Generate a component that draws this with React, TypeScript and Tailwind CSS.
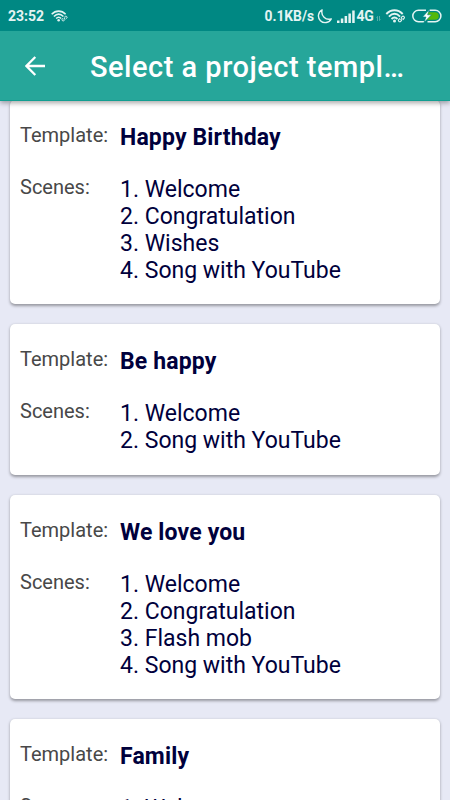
import { ReactNode } from "react";

const templates = [
  {
    id: 1,
    name: "Happy Birthday",
    scenes: ["Welcome", "Congratulation", "Wishes", "Song with YouTube"],
  },
  {
    id: 2,
    name: "Be happy",
    scenes: ["Welcome", "Song with YouTube"],
  },
  {
    id: 3,
    name: "We love you",
    scenes: ["Welcome", "Congratulation", "Flash mob", "Song with YouTube"],
  },
  {
    id: 4,
    name: "Family",
    scenes: ["Welcome"],
  },
];

const WifiIcon = ({ className }: { className: string }) => (
  <svg viewBox="0 0 20 14" fill="none" stroke="currentColor" className={className}>
    <path d="M0.8 5C5.5 0 12.5 0 17.2 5" strokeWidth="1.9" />
    <path d="M3.4 7.6C7 4 11 4 14.6 7.6" strokeWidth="1.9" />
    <path d="M6 10C8 8 10 8 12 10" strokeWidth="1.8" />
    <circle cx="9" cy="12" r="1.5" fill="currentColor" stroke="none" />
    <path
      d="M15.4 8.8l1.2-1.2a1.3 1.3 0 0 1 1.9 1.9l-1.3 1.3M16.4 11.2l-1.2 1.2a1.3 1.3 0 0 1-1.9-1.9l1.2-1.2M15 11l1.8-1.9"
      strokeWidth="1.1"
    />
  </svg>
);

const StatusBar = () => (
  <div className="flex h-[31px] items-center bg-[#008883] pt-px pr-[8px] pl-[8px] font-bold text-[#e4f4f3]">
    <span className="w-[37px] text-[14px]">23:52</span>
    <WifiIcon className="ml-[6px] h-[12px] w-[17px]" />
    <div className="ml-auto flex items-center">
      <span className="w-[50px] text-[13.8px] whitespace-nowrap">0.1KB/s</span>
      <svg viewBox="0 0 14 14" fill="none" stroke="currentColor" className="ml-[2px] h-[15px] w-[15px]">
        <path
          d="M4.8 0.8A6.3 6.3 0 1 0 13.3 9.2C8.2 10.9 3.3 6.2 4.8 0.8Z"
          strokeWidth="1.3"
          strokeLinejoin="round"
        />
      </svg>
      <svg viewBox="0 0 18 13" fill="currentColor" className="ml-[5px] h-[13px] w-[18px]">
        <rect x="0" y="10.5" width="2.5" height="2.5" />
        <rect x="3.8" y="8.5" width="2.5" height="4.5" />
        <rect x="7.6" y="6" width="2.5" height="7" />
        <rect x="11.4" y="3.5" width="2.5" height="9.5" />
        <rect x="15.2" y="0.5" width="2.5" height="12.5" />
      </svg>
      <span className="ml-[2px] w-[18px] text-[14px] tracking-[-0.2px]">4G</span>
      <svg viewBox="0 0 5 5" fill="none" stroke="currentColor" className="mt-[5px] ml-[1.5px] h-[5px] w-[5px] opacity-45">
        <path d="M1.5 5V0.5L0.5 1.5M3.5 0V4.5L4.5 3.5" strokeWidth="0.8" />
      </svg>
      <WifiIcon className="ml-[4px] h-[14px] w-[21px]" />
      <svg viewBox="0 0 30 14" fill="none" className="ml-[6px] h-[14px] w-[30px]">
        <path d="M14 3.2H23a3.8 3.8 0 0 1 0 7.6H14Z" fill="#55b80b" />
        <path
          d="M14 1.3H6.5a5.7 5.7 0 0 0 0 11.4H12M17.5 1.3H23.2a5.7 5.7 0 0 1 0 11.4H15.5"
          stroke="currentColor"
          strokeWidth="1.5"
        />
        <path d="M17.3 0.5L10.6 8H14L12 13.5L19.5 5.8H15.6Z" fill="#fff" stroke="#008883" strokeWidth="0.6" />
      </svg>
    </div>
  </div>
);

const AppBar = () => (
  <header className="flex h-[70px] items-center border-b border-[#129e91] bg-[#26a69a] text-white">
    <svg viewBox="0 0 20 20" fill="none" stroke="currentColor" className="mt-px ml-[25px] h-[20px] w-[20px]">
      <path d="M20 10H2M10.3 1L1.4 10L10.3 19" strokeWidth="2.3" />
    </svg>
    <h1 className="mt-[4px] ml-[45px] text-[29px] leading-none font-medium tracking-[0.5px] whitespace-nowrap">
      Select a project templ…
    </h1>
  </header>
);

const Row = ({ label, children }: { label: string; children: ReactNode }) => (
  <div className="flex text-[23px] leading-[27px] text-[#00003c]">
    <span className="w-[100px] shrink-0 text-[20px] leading-[22px] text-[#484848]">{label}</span>
    {children}
  </div>
);

const App = () => {
  return (
    <div className="flex h-[800px] w-[450px] flex-col overflow-hidden bg-[#e7e9f5] font-['Roboto',sans-serif]">
      <div className="relative z-10 shrink-0 shadow-[0_2px_5px_rgba(0,0,0,0.35)]">
        <StatusBar />
        <AppBar />
      </div>
      <main className="-mt-[1px] flex min-h-0 flex-1 flex-col gap-[20px] px-[10px]">
        {templates.map((template) => (
          <section
            key={template.id}
            className="flex shrink-0 flex-col gap-[25px] rounded-[5px] bg-white px-[10px] pt-[24px] pb-[20.3px] shadow-[0_1.5px_3px_rgba(0,0,0,0.35)]"
          >
            <Row label="Template:">
              <h2 className="font-bold tracking-[0.15px]">{template.name}</h2>
            </Row>
            <Row label="Scenes:">
              <ol>
                {template.scenes.map((scene, index) => (
                  <li key={scene}>
                    {index + 1}. {scene}
                  </li>
                ))}
              </ol>
            </Row>
          </section>
        ))}
      </main>
    </div>
  );
};

export default App;
